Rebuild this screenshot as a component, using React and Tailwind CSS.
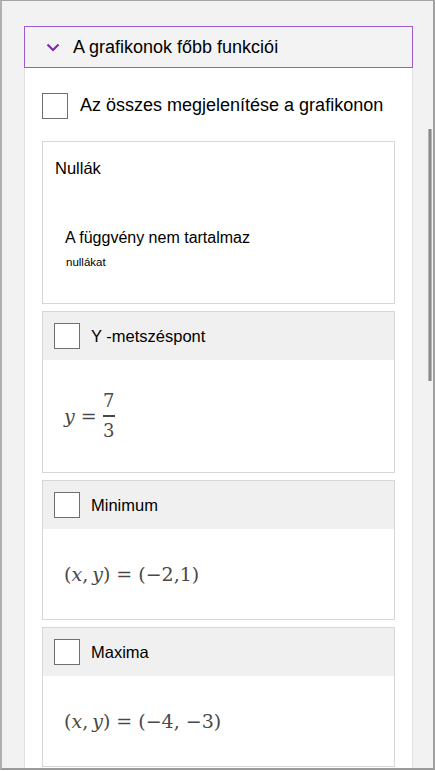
import React from 'react';

const Checkbox = () => (
  <span className="block w-[26px] h-[26px] shrink-0 border-[1.5px] border-[#6f6f6f] bg-white" />
);

const MathText = ({ children }) => (
  <div className="text-[#484848] text-[19px] leading-none" style={{ fontFamily: '"DejaVu Serif", "Liberation Serif", serif' }}>
    {children}
  </div>
);

const Pair = ({ values }) => (
  <MathText>
    <span className="flex items-center">
      <span>(</span>
      <span className="italic">x</span>
      <span className="mr-[4px]">,</span>
      <span className="italic">y</span>
      <span>)</span>
      <span className="mx-[6px]">=</span>
      <span>(</span>
      <span>{values}</span>
      <span>)</span>
    </span>
  </MathText>
);

const FeatureCard = ({ title, height, children }) => (
  <div className={`border border-[#d7d7d7] bg-white flex flex-col ${height}`}>
    <div className="h-[48px] shrink-0 bg-[#f0f0f0] flex items-center pl-[11px] gap-[11px]">
      <Checkbox />
      <span className="text-[16.5px] text-black">{title}</span>
    </div>
    <div className="flex-1 flex items-center pl-[21px]">{children}</div>
  </div>
);

export default function App() {
  return (
    <div
      className="relative h-[770px] bg-[#f2f2f2] border-t border-b-2 border-l-2 border-r-2 border-t-[#a3a3a3] border-b-[#9a9a9a] border-l-[#b0b0b0] border-r-[#a0a0a0] overflow-hidden"
      style={{ fontFamily: '"Liberation Sans", Arial, sans-serif' }}
    >
      <div className="pl-[22px] pr-[20px] pt-[25px]">
        {/* section header */}
        <div className="h-[42px] border-[1.5px] border-[#9d5ad2] bg-[#f3f3f3] flex items-center pl-[21px]">
          <svg width="14" height="10" viewBox="0 0 14 10" className="mr-[13px]">
            <path d="M1.5 2.5 L7 8 L12.5 2.5" fill="none" stroke="#7a2fa8" strokeWidth="2.2" />
          </svg>
          <span className="text-[18px] text-black">A grafikonok főbb funkciói</span>
        </div>

        {/* panel */}
        <div className="bg-white border-l border-r border-[#e2e2e2] h-[720px] px-[17px] pt-[24px]">
          <div className="flex items-center gap-[12px]">
            <Checkbox />
            <span className="text-[18px] text-black">Az összes megjelenítése a grafikonon</span>
          </div>

          <div className="mt-[22px] flex flex-col gap-[7px]">
            <div className="h-[163px] border border-[#d7d7d7] bg-white pl-[12px] pt-[14px]">
              <div className="text-[16.5px] text-black">Nullák</div>
              <div className="pl-[10px] mt-[47px] text-[16px] text-black leading-tight">A függvény nem tartalmaz</div>
              <div className="pl-[11px] mt-[7px] text-[11.5px] text-black leading-tight">nullákat</div>
            </div>

            <FeatureCard title="Y -metszéspont" height="h-[162px]">
              <MathText>
                <span className="flex items-center">
                  <span className="italic">y</span>
                  <span className="mx-[6px]">=</span>
                  <span className="flex flex-col items-center text-[18px]">
                    <span className="leading-none">7</span>
                    <span className="block w-[12px] h-[1.5px] bg-[#484848] my-[5px]" />
                    <span className="leading-none">3</span>
                  </span>
                </span>
              </MathText>
            </FeatureCard>

            <FeatureCard title="Minimum" height="h-[140px]">
              <Pair values="−2,1" />
            </FeatureCard>

            <FeatureCard title="Maxima" height="h-[140px]">
              <Pair values="−4, −3" />
            </FeatureCard>
          </div>
        </div>
      </div>

      {/* scrollbar */}
      <div className="absolute left-[426px] top-[128px] w-[4px] h-[252px] bg-[#8a8a8a] border-x border-[#b5b5b5]" />
    </div>
  );
}
